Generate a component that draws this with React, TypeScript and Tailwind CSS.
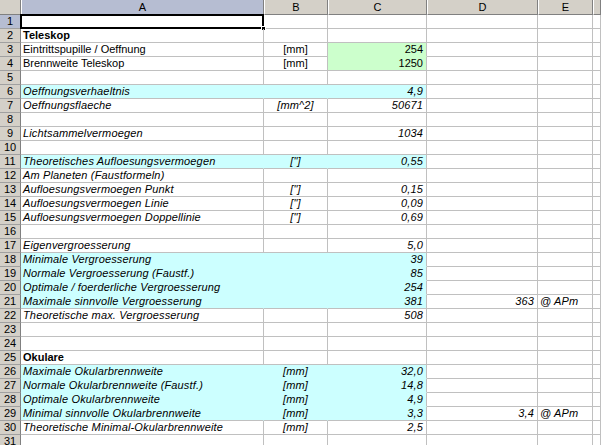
import React from 'react';

type Row = {
  a?: string;
  b?: string;
  c?: string;
  d?: string;
  e?: string;
  fill?: 'cyan' | 'green';
  italic?: boolean;
  bold?: boolean;
};

const ROWS: Row[] = [
  {},
  { a: 'Teleskop', bold: true },
  { a: 'Eintrittspupille / Oeffnung', b: '[mm]', c: '254', fill: 'green' },
  { a: 'Brennweite Teleskop', b: '[mm]', c: '1250', fill: 'green' },
  {},
  { a: 'Oeffnungsverhaeltnis', c: '4,9', fill: 'cyan', italic: true },
  { a: 'Oeffnungsflaeche', b: '[mm^2]', c: '50671', italic: true },
  {},
  { a: 'Lichtsammelvermoegen', c: '1034', italic: true },
  {},
  { a: 'Theoretisches Aufloesungsvermoegen', b: '["]', c: '0,55', fill: 'cyan', italic: true },
  { a: 'Am Planeten (Faustformeln)', italic: true },
  { a: 'Aufloesungsvermoegen Punkt', b: '["]', c: '0,15', italic: true },
  { a: 'Aufloesungsvermoegen Linie', b: '["]', c: '0,09', italic: true },
  { a: 'Aufloesungsvermoegen Doppellinie', b: '["]', c: '0,69', italic: true },
  {},
  { a: 'Eigenvergroesserung', c: '5,0', italic: true },
  { a: 'Minimale Vergroesserung', c: '39', fill: 'cyan', italic: true },
  { a: 'Normale Vergroesserung (Faustf.)', c: '85', fill: 'cyan', italic: true },
  { a: 'Optimale / foerderliche Vergroesserung', c: '254', fill: 'cyan', italic: true },
  { a: 'Maximale sinnvolle Vergroesserung', c: '381', d: '363', e: '@ APm', fill: 'cyan', italic: true },
  { a: 'Theoretische max. Vergroesserung', c: '508', italic: true },
  {},
  {},
  { a: 'Okulare', bold: true },
  { a: 'Maximale Okularbrennweite', b: '[mm]', c: '32,0', fill: 'cyan', italic: true },
  { a: 'Normale Okularbrennweite (Faustf.)', b: '[mm]', c: '14,8', fill: 'cyan', italic: true },
  { a: 'Optimale Okularbrennweite', b: '[mm]', c: '4,9', fill: 'cyan', italic: true },
  { a: 'Minimal sinnvolle Okularbrennweite', b: '[mm]', c: '3,3', d: '3,4', e: '@ APm', fill: 'cyan', italic: true },
  { a: 'Theoretische Minimal-Okularbrennweite', b: '[mm]', c: '2,5', italic: true },
  {},
];

const COLS = ['A', 'B', 'C', 'D', 'E', ''];

const cell = 'border-r border-b border-[#c0c0c0] whitespace-nowrap overflow-visible leading-[13px]';

export default function App() {
  return (
    <div
      className="w-[601px] h-[445px] overflow-hidden bg-white text-[11px] text-black"
      style={{ fontFamily: '"Liberation Sans", Arial, sans-serif' }}
    >
      <div className="grid grid-cols-[21px_243px_64px_99px_111px_55px_1fr] grid-rows-[15px] auto-rows-[14px]">
        {/* column headers */}
        <div className="bg-[#d4d0c8] border-r border-b border-[#808080]" />
        {COLS.map((c) => (
          <div
            key={c || 'F'}
            className={`flex items-center justify-center border-r border-b border-[#808080] border-l border-l-white ${
              c === 'A' ? 'bg-[#b6bdd2]' : 'bg-[#d4d0c8]'
            }`}
          >
            {c}
          </div>
        ))}

        {ROWS.map((r, i) => {
          const cyan = r.fill === 'cyan';
          const green = r.fill === 'green';
          // filled cells hide the gridlines inside the filled block
          const nextFill = ROWS[i + 1]?.fill;
          const fillAB = cyan ? `bg-[#ccffff] border-r-[#ccffff] ${nextFill === 'cyan' ? 'border-b-[#ccffff]' : ''}` : '';
          const fillC = cyan
            ? `bg-[#ccffff] ${nextFill === 'cyan' ? 'border-b-[#ccffff]' : ''}`
            : green
              ? `bg-[#ccffcc] ${nextFill === 'green' ? 'border-b-[#ccffcc]' : ''}`
              : '';
          const style = `${r.italic ? 'italic tracking-[0.15px]' : ''} ${r.bold ? 'font-bold' : ''}`;
          return (
            <React.Fragment key={i}>
              <div
                className={`flex items-center justify-center border-r border-b border-[#808080] border-b-[#a0a0a0] ${
                  i === 0 ? 'bg-[#b6bdd2]' : 'bg-[#d4d0c8]'
                }`}
              >
                {i + 1}
              </div>
              <div className={`${cell} ${fillAB} ${style} relative pl-[2px]`}>
                {r.a}
                {i === 0 && (
                  <>
                    <div className="absolute -left-px -top-px -right-px -bottom-px border-2 border-black" />
                    <div className="absolute -right-[3px] -bottom-[3px] w-[5px] h-[5px] bg-black border border-white" />
                  </>
                )}
              </div>
              <div className={`${cell} ${fillAB} ${style} text-center`}>{r.b}</div>
              <div className={`${cell} ${fillC} ${style} text-right pr-[3px]`}>{r.c}</div>
              <div className={`${cell} ${style} text-right pr-[3px]`}>{r.d}</div>
              <div className={`${cell} ${style} pl-[2px]`}>{r.e}</div>
              <div className={cell} />
            </React.Fragment>
          );
        })}
      </div>
    </div>
  );
}
